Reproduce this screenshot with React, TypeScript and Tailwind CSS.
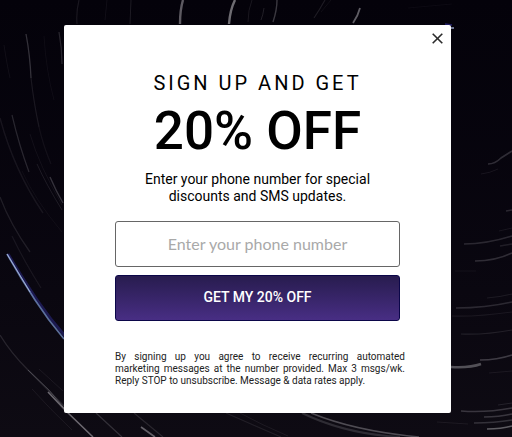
import { FormEvent, useState } from 'react';

interface Trail {
  d: string;
  color: string;
  width: number;
  opacity: number;
}

const FAINT_TRAILS: Trail[] = [
  // top edge
  { d: 'M79 0 Q76 12 77 24', color: '#77747c', width: 1.2, opacity: 0.5 },
  { d: 'M131 0 L130 24', color: '#77747c', width: 1, opacity: 0.6 },
  { d: 'M107 0 L105 20', color: '#77747c', width: 1, opacity: 0.3 },
  { d: 'M252 0 Q248 10 248 22', color: '#77747c', width: 1, opacity: 0.5 },
  { d: 'M277 0 Q277 10 273 22', color: '#a5a2a8', width: 1.4, opacity: 0.9 },
  { d: 'M264 8 Q263 15 261 20', color: '#8a878e', width: 1, opacity: 0.6 },
  { d: 'M325 0 Q320 9 314 18', color: '#8a878e', width: 1.2, opacity: 0.5 },
  { d: 'M331 0 L321 12', color: '#77747c', width: 1, opacity: 0.3 },
  { d: 'M408 8 Q430 6 452 4', color: '#77747c', width: 1, opacity: 0.2 },
  // left side
  { d: 'M26 34 Q30 55 31 78', color: '#a19ea6', width: 1.3, opacity: 0.8 },
  { d: 'M31 78 Q34 104 39 127', color: '#77747c', width: 1.2, opacity: 0.5 },
  { d: 'M39 127 Q43 145 51 164', color: '#77747c', width: 1.2, opacity: 0.3 },
  { d: 'M59 32 Q62 48 62 64', color: '#a19ea6', width: 1.3, opacity: 0.6 },
  { d: 'M44 36 Q46 70 54 100', color: '#5f5c65', width: 1, opacity: 0.3 },
  { d: 'M4 45 Q7 65 10 78', color: '#77747c', width: 1, opacity: 0.3 },
  { d: 'M12 115 Q19 145 29 172', color: '#a19ea6', width: 1.2, opacity: 0.6 },
  { d: 'M0 118 Q14 170 43 213', color: '#77747c', width: 1.4, opacity: 0.4 },
  { d: 'M30 134 Q39 165 62 205', color: '#77747c', width: 1, opacity: 0.3 },
  { d: 'M37 164 Q46 184 62 210', color: '#a19ea6', width: 1, opacity: 0.4 },
  { d: 'M50 177 Q56 191 63 203', color: '#b5b2ba', width: 1.4, opacity: 0.7 },
  { d: 'M22 171 Q35 200 62 232', color: '#5f5c65', width: 1, opacity: 0.3 },
  { d: 'M0 197 Q10 224 30 252', color: '#8a878e', width: 1.3, opacity: 0.5 },
  { d: 'M12 236 Q24 261 41 288', color: '#77747c', width: 1.2, opacity: 0.4 },
  { d: 'M0 335 Q11 353 28 370 L66 408', color: '#8a878e', width: 1.3, opacity: 0.6 },
  { d: 'M39 369 L63 391', color: '#77747c', width: 1, opacity: 0.4 },
  { d: 'M32 389 Q50 409 72 430', color: '#77747c', width: 1, opacity: 0.4 },
  // below the card
  { d: 'M96 413 L122 437', color: '#8a878e', width: 1.2, opacity: 0.8 },
  { d: 'M134 413 L163 437', color: '#8a878e', width: 1.2, opacity: 0.6 },
  { d: 'M226 413 Q253 425 281 437', color: '#77747c', width: 1.2, opacity: 0.5 },
  { d: 'M240 413 Q262 425 288 436', color: '#77747c', width: 1, opacity: 0.4 },
  // right side
  { d: 'M488 164 Q495 164 501 158 L512 151', color: '#a19ea6', width: 1.6, opacity: 0.7 },
  { d: 'M481 174 Q490 173 498 169', color: '#77747c', width: 1, opacity: 0.4 },
  { d: 'M506 211 L512 210', color: '#a19ea6', width: 1.6, opacity: 0.6 },
  { d: 'M464 244 Q486 244 512 236', color: '#a19ea6', width: 1.4, opacity: 0.6 },
  { d: 'M475 261 Q495 261 512 253', color: '#b5b2ba', width: 1.4, opacity: 0.6 },
  { d: 'M500 246 L512 244', color: '#8a878e', width: 1.5, opacity: 0.5 },
  { d: 'M499 231 L512 228', color: '#77747c', width: 1, opacity: 0.4 },
  { d: 'M455 271 L476 271', color: '#77747c', width: 1, opacity: 0.3 },
  { d: 'M487 298 Q500 297 512 294', color: '#8a878e', width: 1.2, opacity: 0.4 },
  { d: 'M456 308 Q485 308 512 302', color: '#a19ea6', width: 1.4, opacity: 0.6 },
  { d: 'M452 316 Q475 317 512 312', color: '#77747c', width: 1.2, opacity: 0.4 },
  { d: 'M461 334 Q485 335 512 330', color: '#8a878e', width: 1.2, opacity: 0.5 },
  { d: 'M480 360 Q497 360 512 355', color: '#b5b2ba', width: 1.4, opacity: 0.8 },
  { d: 'M489 373 L512 371', color: '#77747c', width: 1.2, opacity: 0.4 },
  { d: 'M461 411 Q485 413 512 408', color: '#a19ea6', width: 1.4, opacity: 0.8 },
  { d: 'M484 417 Q499 417 512 414', color: '#a19ea6', width: 1.4, opacity: 0.8 },
  { d: 'M474 423 Q494 423 512 420', color: '#a19ea6', width: 1.3, opacity: 0.7 },
  { d: 'M437 422 L468 424', color: '#77747c', width: 1, opacity: 0.4 },
  { d: 'M498 405 L512 403', color: '#8a878e', width: 1.2, opacity: 0.5 },
];

const BRIGHT_TRAILS: Trail[] = [
  { d: 'M183 0 Q180 10 180 24', color: '#c9c6cc', width: 2.4, opacity: 0.45 },
  { d: 'M235 0 Q230 10 229 24', color: '#d8d6da', width: 2.4, opacity: 0.5 },
  { d: 'M360 8 Q358 16 353 23', color: '#cfccd2', width: 1.8, opacity: 0.45 },
  { d: 'M28 370 L49 390 L64 408', color: '#c9c6cc', width: 1, opacity: 0.25 },
  { d: 'M48 392 L66 411 L93 437', color: '#c9c6cc', width: 1.6, opacity: 0.5 },
  { d: 'M141 427 L155 437', color: '#c9c6cc', width: 1.6, opacity: 0.45 },
  { d: 'M302 413 Q345 434 400 437', color: '#b5b2ba', width: 2, opacity: 0.2 },
  { d: 'M311 413 Q355 431 419 437', color: '#c9c6cc', width: 1.5, opacity: 0.35 },
  { d: 'M451 367 Q470 368 481 364', color: '#d8d6da', width: 2.4, opacity: 0.35 },
  { d: 'M487 429 Q501 429 512 426', color: '#d8d6da', width: 1.5, opacity: 0.4 },
  // blue ones
  { d: 'M8 254 Q21 276 37 300 Q50 319 65 336', color: '#2e2b8f', width: 3, opacity: 0.5 },
  { d: 'M7 254 Q20 277 35 300 Q48 320 64 339', color: '#7f9cd6', width: 1.6, opacity: 0.7 },
  { d: 'M7 254 L30 292', color: '#e4ecff', width: 1, opacity: 0.5 },
  { d: 'M445 24 L452 25', color: '#3532a8', width: 1.4, opacity: 0.6 },
  { d: 'M450 28 L454 28', color: '#c4d2ff', width: 1.4, opacity: 0.8 },
];

function TrailPath({ trail }: { trail: Trail }) {
  return <path d={trail.d} stroke={trail.color} strokeWidth={trail.width} opacity={trail.opacity} />;
}

function StarTrails() {
  return (
    <svg
      className="absolute inset-0 h-full w-full"
      viewBox="0 0 512 437"
      preserveAspectRatio="xMidYMid slice"
      fill="none"
      aria-hidden="true"
    >
      <g opacity="0.38">
        {FAINT_TRAILS.map((trail, i) => (
          <TrailPath key={i} trail={trail} />
        ))}
      </g>
      {BRIGHT_TRAILS.map((trail, i) => (
        <TrailPath key={i} trail={trail} />
      ))}
    </svg>
  );
}

export default function App() {
  const [open, setOpen] = useState(true);
  const [phone, setPhone] = useState('');

  const handleSubmit = (e: FormEvent) => {
    e.preventDefault();
    setOpen(false);
  };

  return (
    <main
      className="relative flex min-h-screen items-center justify-center overflow-hidden bg-linear-to-b from-[#04020a] to-[#0e0b13] pl-16 pr-[61px]"
      style={{ fontFamily: 'Roboto, sans-serif' }}
    >
      <StarTrails />

      {open && (
        <section
          role="dialog"
          aria-labelledby="offer-title"
          className="relative w-full max-w-[387px] rounded-[2px] bg-white pt-[46px] pr-[46px] pb-[26px] pl-[51px] text-black"
        >
          {/* Close */}
          <button
            type="button"
            aria-label="Close"
            onClick={() => setOpen(false)}
            className="absolute top-2 right-2 cursor-pointer"
          >
            <svg width="11" height="11" viewBox="0 0 11 11" stroke="#2b2b2b" strokeWidth="1.6">
              <path d="M0.7 0.7 L10.3 10.3 M10.3 0.7 L0.7 10.3" />
            </svg>
          </button>

          <div className="pr-[5px] text-center">
            <h1 id="offer-title">
              <span className="block text-[20px] leading-6 tracking-[3px] whitespace-nowrap">SIGN UP AND GET</span>
              <span className="block text-[53px] leading-[72px] font-medium whitespace-nowrap">20% OFF</span>
            </h1>
            <p className="mt-1 px-6 text-[14px] leading-[17px]">
              Enter your phone number for special discounts and SMS updates.
            </p>

            <form onSubmit={handleSubmit} className="mt-4 flex flex-col gap-2">
              <input
                type="tel"
                aria-label="Phone number"
                placeholder="Enter your phone number"
                value={phone}
                onChange={e => setPhone(e.target.value)}
                className="h-[46px] w-full rounded-[3px] border border-[#666] bg-white text-center text-[16px] outline-none placeholder:text-[#a9a9a9]"
                style={{ fontFamily: 'Lato, sans-serif' }}
              />
              <button
                type="submit"
                className="h-[46px] w-full cursor-pointer rounded-[3px] border border-[#0b0649] bg-linear-to-b from-[#281c4f] to-[#482e84] text-[14px] font-medium text-white"
              >
                GET MY 20% OFF
              </button>
            </form>
          </div>

          <p className="mt-[30px] text-justify text-[10px] leading-3 text-[#222]">
            By signing up you agree to receive recurring automated marketing messages at the number provided. Max 3
            msgs/wk. Reply STOP to unsubscribe. Message &amp; data rates apply.
          </p>
        </section>
      )}
    </main>
  );
}
